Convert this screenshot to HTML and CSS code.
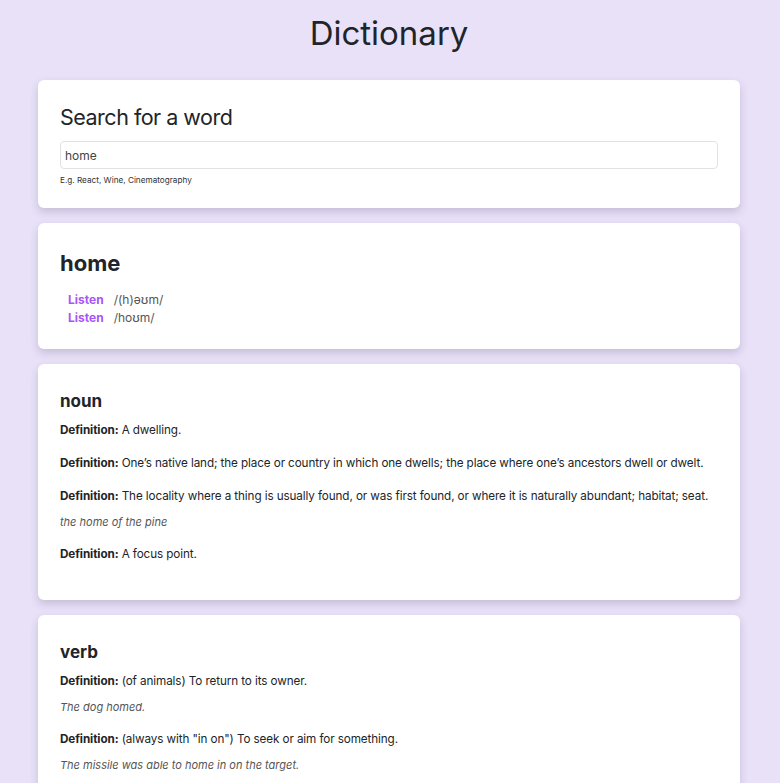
FILE: index.html
```html
<!DOCTYPE html>
<html lang="en">
<head>
<meta charset="utf-8">
<title>Dictionary</title>
<link rel="stylesheet" href="styles.css">
</head>
<body>
<div class="app">
  <h1 class="title">Dictionary</h1>
  <section class="card search">
    <h2 class="search-title">Search for a word</h2>
    <input class="search-input" type="search" value="home">
    <div class="hint">E.g. React, Wine, Cinematography</div>
  </section>
  <section class="card word">
    <h2 class="word-title">home</h2>
    <div class="phonetics">
      <div class="phonetic"><a class="listen" href="#">Listen</a><span class="ipa">/(h)əʊm/</span></div>
      <div class="phonetic"><a class="listen" href="#">Listen</a><span class="ipa">/hoʊm/</span></div>
    </div>
  </section>
  <section class="card meaning">
    <h3 class="pos">noun</h3>
    <div class="def"><p class="def-text"><strong>Definition:</strong> A dwelling.</p></div>
    <div class="def"><p class="def-text"><strong>Definition:</strong> One’s native land; the place or country in which one dwells; the place where one’s ancestors dwell or dwelt.</p></div>
    <div class="def"><p class="def-text"><strong>Definition:</strong> The locality where a thing is usually found, or was first found, or where it is naturally abundant; habitat; seat.</p><p class="example">the home of the pine</p></div>
    <div class="def"><p class="def-text"><strong>Definition:</strong> A focus point.</p></div>
  </section>
  <section class="card meaning">
    <h3 class="pos">verb</h3>
    <div class="def"><p class="def-text"><strong>Definition:</strong> (of animals) To return to its owner.</p><p class="example">The dog homed.</p></div>
    <div class="def"><p class="def-text"><strong>Definition:</strong> (always with "in on") To seek or aim for something.</p><p class="example">The missile was able to home in on the target.</p></div>
  </section>
</div>
</body>
</html>
```
FILE: styles.css
```css
* { box-sizing: border-box; }
html, body { margin: 0; padding: 0; }
body {
  background: #e9e1f8;
  font-family: Inter, "Noto Sans", sans-serif;
  color: #212529;
}
.app {
  padding: 0 40px 40px 38px;
  display: flex;
  flex-direction: column;
  gap: 15px;
}
.title {
  margin: 13px 0 12px;
  text-align: center;
  font-size: 33px;
  font-weight: 400;
  line-height: 40px;
}
.card {
  background: #fff;
  border-radius: 6px;
  box-shadow: 0 4px 8px rgba(60, 50, 90, 0.2);
  padding: 22px;
}
.search-title {
  margin: 1px 0 10px;
  font-size: 21.5px;
  font-weight: 400;
  letter-spacing: -0.5px;
  line-height: 28px;
}
.search-input {
  display: block;
  width: 100%;
  height: 28px;
  border: 1px solid #e2e2e2;
  border-radius: 4px;
  padding: 0 4px;
  font-family: inherit;
  font-size: 12px;
  color: #444;
  outline: none;
  -webkit-appearance: none;
  appearance: none;
}
.hint {
  margin-top: 6px;
  font-size: 8.2px;
  line-height: 11px;
  color: #333;
}
.word-title {
  margin: 3px 0 13px;
  font-size: 22px;
  font-weight: 700;
  line-height: 30px;
}
.phonetics {
  padding-left: 8px;
  display: flex;
  flex-direction: column;
}
.phonetic {
  display: flex;
  gap: 10px;
  font-size: 12px;
  line-height: 18px;
}
.listen {
  color: #a855f7;
  font-weight: 700;
  text-decoration: none;
}
.ipa { color: #555; }
.pos {
  margin: 0 0 6px;
  font-size: 17px;
  font-weight: 700;
  line-height: 30px;
}
.def { margin-bottom: 16px; }
.def:last-child { margin-bottom: 15px; }
.def-text {
  margin: 0;
  font-size: 11.7px;
  letter-spacing: -0.1px;
  line-height: 17px;
}
.def-text strong { font-weight: 700; }
.example {
  margin: 9px 0 0;
  font-size: 11px;
  font-style: italic;
  line-height: 16px;
  color: #555;
}
```
